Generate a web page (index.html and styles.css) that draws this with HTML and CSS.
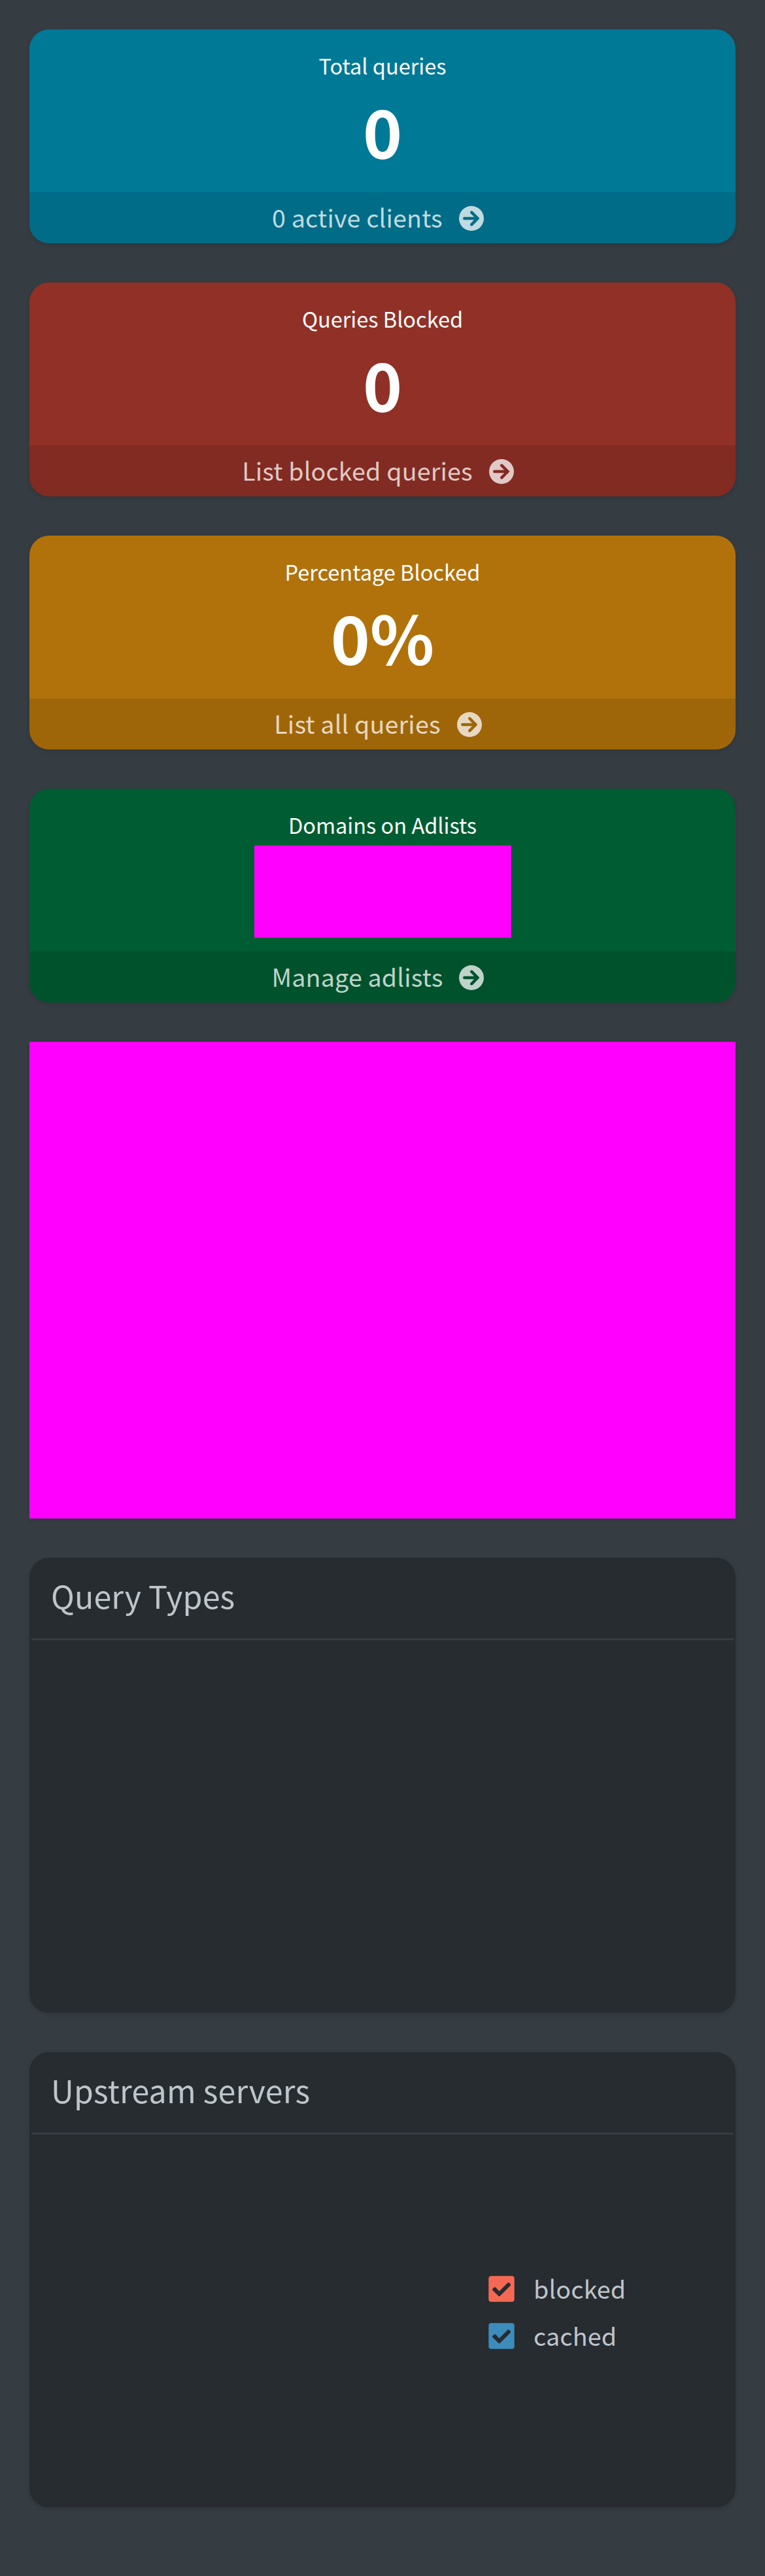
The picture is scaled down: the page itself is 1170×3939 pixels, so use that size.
FILE: index.html
```html
<!DOCTYPE html>
<html lang="en">
<head>
<meta charset="utf-8">
<title>Dashboard</title>
<link rel="stylesheet" href="styles.css">
</head>
<body>
<svg class="defs" aria-hidden="true">
  <symbol id="arrow" viewBox="0 0 512 512"><path fill-rule="evenodd" d="M256 0a256 256 0 1 1 0 512a256 256 0 1 1 0-512zM281 109c-12-12-31-12-43 0s-12 31 0 43l74 74H112a30 30 0 0 0 0 60H312l-74 74c-12 12-12 31 0 43s31 12 43 0L413 271a21 21 0 0 0 0-30z"/></symbol>
  <symbol id="check" viewBox="0 0 40 40"><path fill-rule="evenodd" d="M4.300 .3h31.400a4 4 0 0 1 4 4v31.400a4 4 0 0 1-4 4H4.300a4 4 0 0 1-4-4V4.300a4 4 0 0 1 4-4zM17.900 30.800L33.600 15a2 2 0 0 0 0-2.600l-1.700-1.700a2 2 0 0 0-2.600 0L16.600 23.400l-5.500-5.600a2 2 0 0 0-2.600 0l-1.900 1.900a2 2 0 0 0 0 2.600l8.700 8.500a2 2 0 0 0 2.600 0z"/></symbol>
</svg>
<main class="dashboard">
  <section class="stat aqua">
    <div class="inner"><p class="label">Total queries</p><h3 class="value">0</h3></div>
    <a class="footer"><span>0 active clients</span><svg class="arrow"><use href="#arrow"/></svg></a>
  </section>
  <section class="stat red">
    <div class="inner"><p class="label">Queries Blocked</p><h3 class="value">0</h3></div>
    <a class="footer"><span>List blocked queries</span><svg class="arrow"><use href="#arrow"/></svg></a>
  </section>
  <section class="stat yellow">
    <div class="inner"><p class="label">Percentage Blocked</p><h3 class="value">0%</h3></div>
    <a class="footer"><span>List all queries</span><svg class="arrow"><use href="#arrow"/></svg></a>
  </section>
  <section class="stat green">
    <div class="inner"><p class="label">Domains on Adlists</p><div class="value-block"></div></div>
    <a class="footer"><span>Manage adlists</span><svg class="arrow"><use href="#arrow"/></svg></a>
  </section>
  <section class="chart-block"></section>
  <section class="box">
    <h3 class="box-title">Query Types</h3>
  </section>
  <section class="box">
    <h3 class="box-title">Upstream servers</h3>
    <ul class="legend">
      <li><svg class="check blocked"><use href="#check"/></svg><span>blocked</span></li>
      <li><svg class="check cached"><use href="#check"/></svg><span>cached</span></li>
    </ul>
  </section>
</main>
</body>
</html>
```
FILE: styles.css
```css
* { box-sizing: border-box; }
body {
  margin: 0;
  background: #353c42;
  color: #bec5cb;
  font-family: "Noto Sans CJK SC", "Noto Sans", sans-serif;
}
h3, p, ul { margin: 0; padding: 0; font-weight: 400; }
.defs { display: none; }
.dashboard {
  display: flex;
  flex-direction: column;
  gap: 60px;
  min-height: 3939px;
  padding: 45px;
}
.stat {
  height: 327px;
  border-radius: 30px;
  overflow: hidden;
  color: #fff;
  text-align: center;
  box-shadow: 0 3px 6px rgba(0, 0, 0, .1);
}
.aqua { background: #007997; }
.red { background: #913026; }
.yellow { background: #b1720b; }
.green { background: #005c32; }
.inner { height: 249px; padding-top: 29px; }
.label { font-size: 32.5px; line-height: 51px; }
.value { margin-top: 11px; font-size: 102px; line-height: 125px; font-weight: 700; }
.value-block { width: 393px; height: 141px; margin: 7px auto 0; background: #f0f; }
.footer {
  display: flex;
  justify-content: center;
  align-items: center;
  gap: 25px;
  height: 78px;
  padding: 0 14px 0 0;
  background: rgba(0, 0, 0, .1);
  color: rgba(255, 255, 255, .75);
  font-size: 37.6px;
  letter-spacing: .2px;
  line-height: 75px;
}
.footer span { height: 78px; }
.arrow { width: 38px; height: 38px; margin-top: 2px; fill: currentColor; }
.chart-block { height: 729px; background: #f0f; box-shadow: 0 3px 6px rgba(0, 0, 0, .1); }
.box {
  height: 696px;
  border: 3px solid #272c30;
  border-radius: 30px;
  background: #272c30;
  box-shadow: 0 3px 6px rgba(0, 0, 0, .1);
}
.box-title {
  height: 123px;
  padding-left: 30px;
  border-bottom: 3px solid #353c42;
  font-size: 48.3px;
  letter-spacing: .15px;
  line-height: 108px;
}
.legend {
  margin: 200px 0 0 699px;
  list-style: none;
  font-size: 37.6px;
  letter-spacing: .2px;
  line-height: 70px;
}
.legend li { display: flex; align-items: center; gap: 29px; height: 72px; }
.legend span { height: 72px; }
.check { width: 40px; height: 40px; }
.blocked { fill: #f56954; }
.cached { fill: #3c8dbc; }
```
